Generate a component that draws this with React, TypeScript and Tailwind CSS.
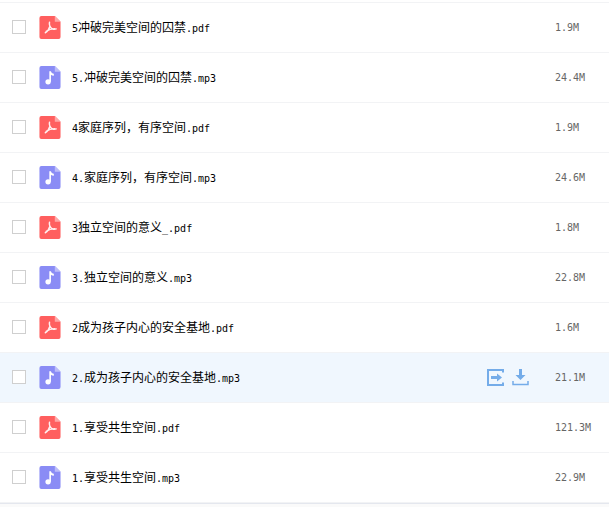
import React from 'react';

interface FileRow {
  name: string;
  size: string;
  type: 'pdf' | 'mp3';
  active?: boolean;
}

const FILES: FileRow[] = [
  { name: '5冲破完美空间的囚禁.pdf', size: '1.9M', type: 'pdf' },
  { name: '5.冲破完美空间的囚禁.mp3', size: '24.4M', type: 'mp3' },
  { name: '4家庭序列\uff0c有序空间.pdf', size: '1.9M', type: 'pdf' },
  { name: '4.家庭序列\uff0c有序空间.mp3', size: '24.6M', type: 'mp3' },
  { name: '3独立空间的意义_.pdf', size: '1.8M', type: 'pdf' },
  { name: '3.独立空间的意义.mp3', size: '22.8M', type: 'mp3' },
  { name: '2成为孩子内心的安全基地.pdf', size: '1.6M', type: 'pdf' },
  { name: '2.成为孩子内心的安全基地.mp3', size: '21.1M', type: 'mp3', active: true },
  { name: '1.享受共生空间.pdf', size: '121.3M', type: 'pdf' },
  { name: '1.享受共生空间.mp3', size: '22.9M', type: 'mp3' },
];

// latin is 6px wide next to 12px cjk, so it gets its own smaller run
const MixedText = ({ text }: { text: string }) => {
  const parts = text.match(/[\x00-\x7f]+|[^\x00-\x7f]+/g) || [];
  return (
    <>
      {parts.map((part, index) =>
        /^[\x00-\x7f]/.test(part) ? (
          <span key={index} className="font-['DejaVu_Sans_Mono',monospace] text-[10px]">
            {part}
          </span>
        ) : (
          <span key={index} className="font-['Noto_Sans_CJK_SC',sans-serif] text-[12px]">
            {part}
          </span>
        ),
      )}
    </>
  );
};

const PdfIcon = () => (
  <svg width="22" height="23" viewBox="0 0 22 24">
    <path d="M2 0h14l6 6v16a2 2 0 0 1-2 2H2a2 2 0 0 1-2-2V2a2 2 0 0 1 2-2z" fill="#ff5f5f" />
    <path d="M16 0l6 6h-6z" fill="#ffa8a8" />
    <path
      d="M10.500 6.500c-.6 2.500.6 5 2.600 6.800 1.600.6 3.200.6 4.400.2M10.800 11c-.8 3-2.300 5.200-4.800 6.500M7 16c2.500-1.600 6-2.700 9-2.600"
      fill="none"
      stroke="#fff"
      strokeWidth="1.500"
      strokeLinecap="round"
      opacity="0.9"
    />
  </svg>
);

const AudioIcon = () => (
  <svg width="22" height="23" viewBox="0 0 22 24">
    <path d="M2 0h14l6 6v16a2 2 0 0 1-2 2H2a2 2 0 0 1-2-2V2a2 2 0 0 1 2-2z" fill="#8a8cf5" />
    <path d="M16 0l6 6h-6z" fill="#bcbdfa" />
    <circle cx="9" cy="16.500" r="2.800" fill="#fff" />
    <path d="M10.300 16.500V5.500h1.700c.3 1.500 1.500 2.400 3 2.700v2c-1.200-.1-2.300-.5-3-1.200v7.500z" fill="#fff" />
  </svg>
);

const MoveIcon = () => (
  <svg width="17" height="17" viewBox="0 0 17 17">
    <path d="M16 3.500V1H1v15h15v-2.500" fill="none" stroke="#74ace9" strokeWidth="2" />
    <path d="M4 7h6V4.500L15 8.500l-5 4V10H4z" fill="#74ace9" />
  </svg>
);

const DownloadIcon = () => (
  <svg width="17" height="17" viewBox="0 0 17 17">
    <path d="M7 0h3v6h3.500l-5 5-5-5H7z" fill="#74ace9" />
    <path d="M1 12v3.500h15V12" fill="none" stroke="#74ace9" strokeWidth="1.500" />
  </svg>
);

const Row = ({ file }: { file: FileRow }) => (
  <div
    className={`flex h-[50px] items-center border-b border-[#f2f3f5] text-black ${
      file.active ? 'bg-[#f0f7fe]' : 'bg-white'
    }`}
  >
    <div className="ml-3 mb-[1px] h-[14px] w-[14px] border border-[#cfcfcf] bg-white" />
    <div className="ml-[13px] flex w-[33px] shrink-0">
      {file.type === 'pdf' ? <PdfIcon /> : <AudioIcon />}
    </div>
    <div className="mb-[3px] min-w-0 flex-1 leading-none whitespace-nowrap">
      <MixedText text={file.name} />
    </div>
    {file.active && (
      <div className="mr-[26px] flex items-center gap-[8px]">
        <MoveIcon />
        <DownloadIcon />
      </div>
    )}
    <div className="w-[54px] shrink-0 font-['DejaVu_Sans_Mono',monospace] text-[10px] text-[#666]">
      {file.size}
    </div>
  </div>
);

export default function App() {
  return (
    <div className="h-[507px] w-[609px] overflow-hidden bg-[#fafafa]">
      <div className="h-[3px] border-b border-[#f2f3f5] bg-white" />
      <div className="border-b border-[#e4e7ee]">
        {FILES.map((file) => (
          <Row key={file.name} file={file} />
        ))}
      </div>
    </div>
  );
}
